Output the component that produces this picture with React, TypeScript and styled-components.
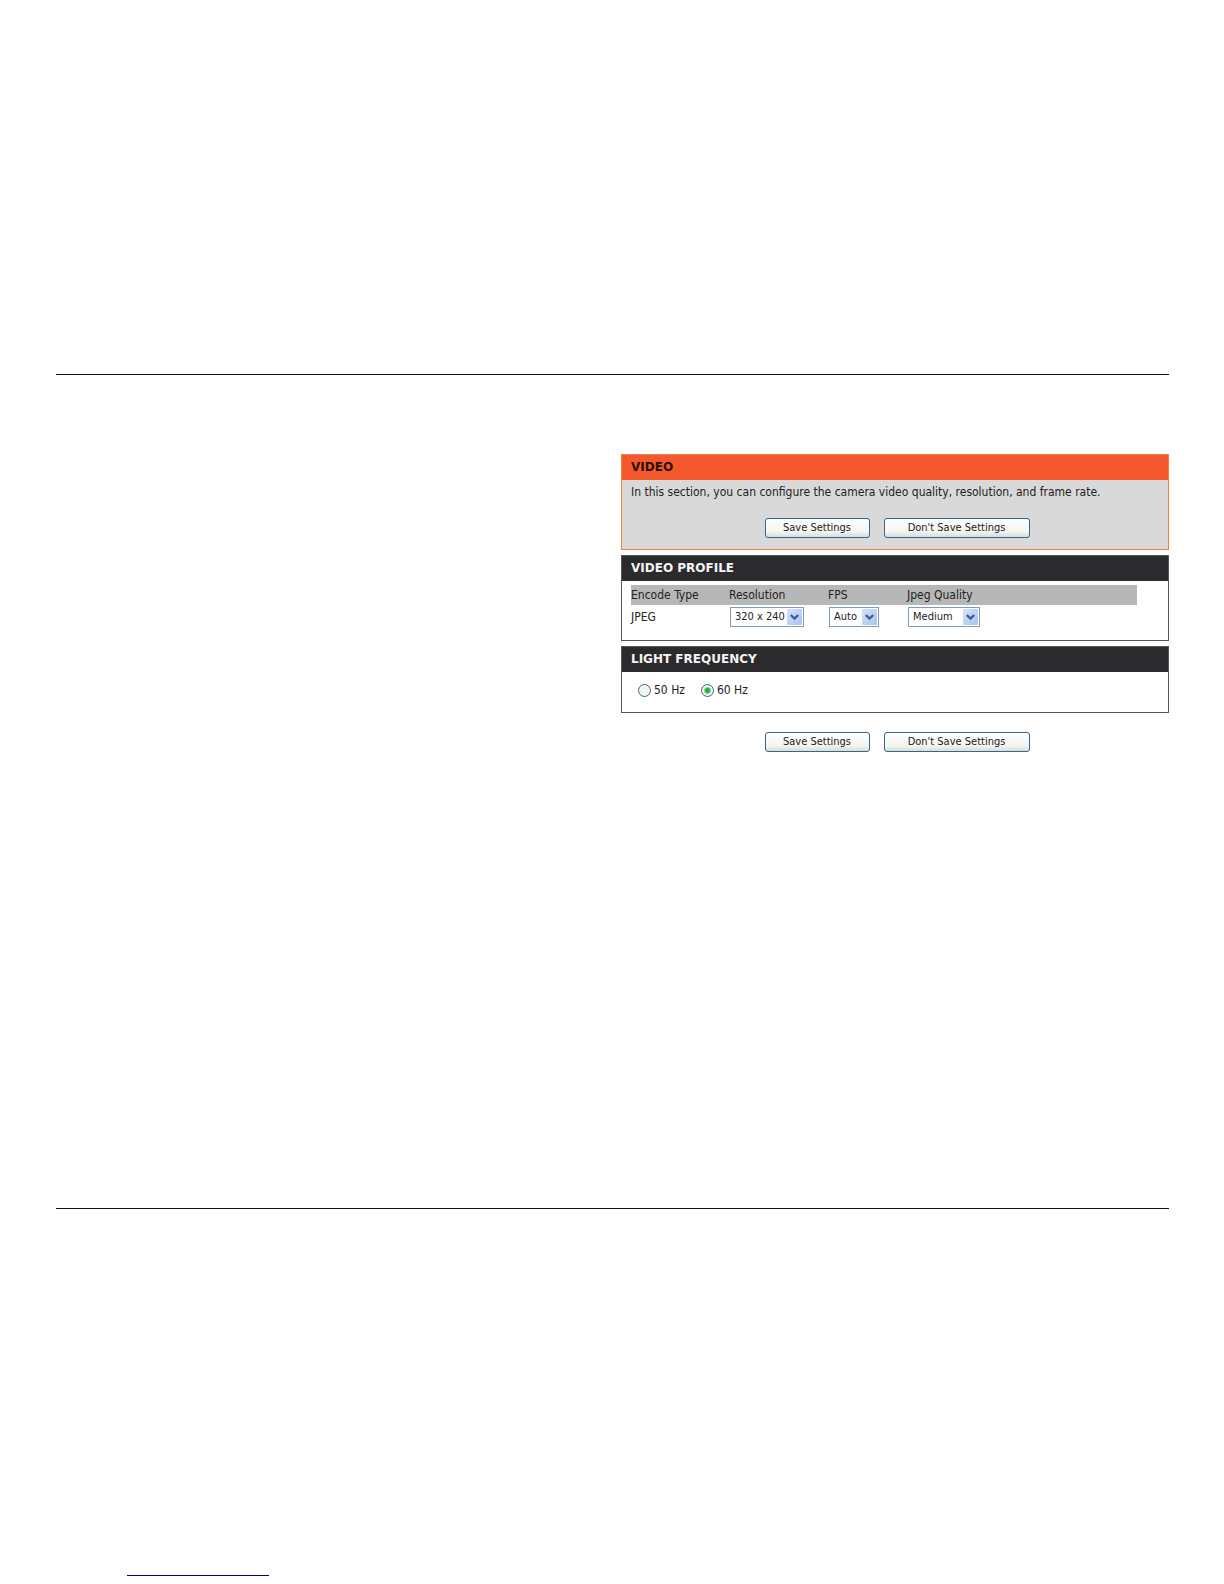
import { useState } from "react";
import styled, { createGlobalStyle } from "styled-components";

const GlobalStyle = createGlobalStyle`
  * {
    box-sizing: border-box;
  }

  body {
    margin: 0;
    background-color: #fff;
    color: #222;
    font-family: "DejaVu Sans Condensed", "DejaVu Sans", sans-serif;
    font-stretch: condensed;
    font-size: 12px;
    line-height: 20px;
  }
`;

const Page = styled.div`
  padding: 374px 55px 0 56px;
`;

const Main = styled.main`
  display: grid;
  grid-template-columns: 1fr 1fr;
  column-gap: 17px;
  align-items: start;
  min-height: 835px;
  padding-top: 79px;
  border-top: 1px solid #111;
  border-bottom: 1px solid #111;
`;

const Settings = styled.form`
  grid-column: 2;
  display: flex;
  flex-direction: column;
  gap: 5px;
`;

type PanelProps = {
  $accent?: boolean;
};

const Panel = styled.section<PanelProps>`
  border: 1px solid ${({ $accent }) => ($accent ? "#f47d3c" : "#555")};
  background-color: ${({ $accent }) => ($accent ? "#d9d9d9" : "#fff")};
`;

const PanelTitle = styled.h2<PanelProps>`
  margin: 0;
  padding: 0 9px;
  background-color: ${({ $accent }) => ($accent ? "#f4592d" : "#2b2b2d")};
  color: ${({ $accent }) => ($accent ? "#2a1008" : "#f4f4f4")};
  font-family: "DejaVu Sans", sans-serif;
  font-stretch: normal;
  font-size: 12px;
  line-height: 25px;
`;

const Intro = styled.div`
  padding: 2px 9px 11px;

  & p {
    margin: 0 0 16px;
  }
`;

const Actions = styled.div`
  display: flex;
  justify-content: center;
  gap: 14px;
  padding-left: 4px;
`;

const Button = styled.button<{ $wide?: boolean }>`
  width: ${({ $wide }) => ($wide ? "146px" : "105px")};
  height: 20px;
  padding: 0;
  border: 1px solid #2f6a94;
  border-radius: 3px;
  background: linear-gradient(#fff, #f4f4f1 70%, #dcdcd6);
  color: #222;
  font: inherit;
  font-size: 11px;
  line-height: 16px;
`;

const FooterActions = styled(Actions)`
  padding-top: 14px;
`;

const ProfileBody = styled.div`
  padding: 4px 31px 13px 9px;
`;

const ProfileTable = styled.table`
  width: 100%;
  table-layout: fixed;
  border-collapse: collapse;

  & th {
    padding: 0;
    background-color: #b7b7b7;
    font-weight: normal;
    text-align: left;
  }

  & td {
    height: 22px;
    padding: 2px 0 0;
    vertical-align: top;
  }
`;

const Column = styled.col<{ $width?: number }>`
  width: ${({ $width }) => ($width ? `${$width}px` : "auto")};
`;

const SelectBox = styled.div<{ $width: number }>`
  position: relative;
  width: ${({ $width }) => $width}px;
  margin-left: 1px;

  & select {
    appearance: none;
    display: block;
    width: 100%;
    height: 20px;
    padding: 0 0 0 4px;
    border: 1px solid #7f9db9;
    border-radius: 0;
    background-color: #fff;
    color: #222;
    font: inherit;
    font-size: 11px;
    line-height: 18px;
  }

  & svg {
    position: absolute;
    top: 2px;
    right: 2px;
    pointer-events: none;
  }
`;

const FrequencyBody = styled.div`
  display: flex;
  gap: 16px;
  padding: 8px 16px 12px;
`;

const RadioLabel = styled.label`
  display: flex;
  align-items: center;
  gap: 3px;

  & input {
    appearance: none;
    width: 13px;
    height: 13px;
    margin: 0;
    border: 1px solid #37678f;
    border-radius: 50%;
    background-color: #f3f5ef;
  }

  & input:checked {
    background-image: radial-gradient(circle, #21b141 2px, transparent 4px);
  }
`;

const Footer = styled.footer`
  padding: 350px 71px 0;
`;

const FooterLink = styled.a`
  display: block;
  width: 142px;
  height: 17px;
  border-bottom: 1px solid #000080;
`;

type SelectFieldProps = {
  label: string;
  width: number;
  options: string[];
  initial: string;
};

function SelectField({ label, width, options, initial }: SelectFieldProps) {
  return (
    <SelectBox $width={width}>
      <select aria-label={label} defaultValue={initial}>
        {options.map((option) => (
          <option key={option}>{option}</option>
        ))}
      </select>
      <svg width="15" height="16" viewBox="0 0 15 16" aria-hidden="true">
        <defs>
          <linearGradient id="arrow" x1="0" y1="0" x2="1" y2="1">
            <stop offset="0" stopColor="#d3e0fb" />
            <stop offset="1" stopColor="#a9c4f2" />
          </linearGradient>
        </defs>
        <rect width="15" height="16" rx="1" fill="url(#arrow)" />
        <path
          d="M3.8 6 L7.5 9.5 L11.2 6"
          fill="none"
          stroke="#41608f"
          strokeWidth="2.4"
        />
      </svg>
    </SelectBox>
  );
}

function SaveButtons() {
  return (
    <>
      <Button type="submit">Save Settings</Button>
      <Button type="reset" $wide>
        Don't Save Settings
      </Button>
    </>
  );
}

export default function App() {
  const [frequency, setFrequency] = useState("60 Hz");

  return (
    <Page>
      <GlobalStyle />
      <Main>
        <Settings onSubmit={(event) => event.preventDefault()}>
          <Panel $accent>
            <PanelTitle $accent>VIDEO</PanelTitle>
            <Intro>
              <p>
                In this section, you can configure the camera video quality,
                resolution, and frame rate.
              </p>
              <Actions>
                <SaveButtons />
              </Actions>
            </Intro>
          </Panel>

          <Panel>
            <PanelTitle>VIDEO PROFILE</PanelTitle>
            <ProfileBody>
              <ProfileTable>
                <colgroup>
                  <Column $width={98} />
                  <Column $width={99} />
                  <Column $width={79} />
                  <Column />
                </colgroup>
                <thead>
                  <tr>
                    <th>Encode Type</th>
                    <th>Resolution</th>
                    <th>FPS</th>
                    <th>Jpeg Quality</th>
                  </tr>
                </thead>
                <tbody>
                  <tr>
                    <td>JPEG</td>
                    <td>
                      <SelectField
                        label="Resolution"
                        width={74}
                        options={["640 x 480", "320 x 240", "160 x 120"]}
                        initial="320 x 240"
                      />
                    </td>
                    <td>
                      <SelectField
                        label="FPS"
                        width={50}
                        options={["Auto", "30", "15", "7"]}
                        initial="Auto"
                      />
                    </td>
                    <td>
                      <SelectField
                        label="Jpeg Quality"
                        width={72}
                        options={["High", "Medium", "Low"]}
                        initial="Medium"
                      />
                    </td>
                  </tr>
                </tbody>
              </ProfileTable>
            </ProfileBody>
          </Panel>

          <Panel>
            <PanelTitle>LIGHT FREQUENCY</PanelTitle>
            <FrequencyBody>
              {["50 Hz", "60 Hz"].map((value) => (
                <RadioLabel key={value}>
                  <input
                    type="radio"
                    name="frequency"
                    value={value}
                    checked={frequency === value}
                    onChange={() => setFrequency(value)}
                  />
                  {value}
                </RadioLabel>
              ))}
            </FrequencyBody>
          </Panel>

          <FooterActions>
            <SaveButtons />
          </FooterActions>
        </Settings>
      </Main>
      <Footer>
        <FooterLink href="#" aria-label="Home" />
      </Footer>
    </Page>
  );
}
